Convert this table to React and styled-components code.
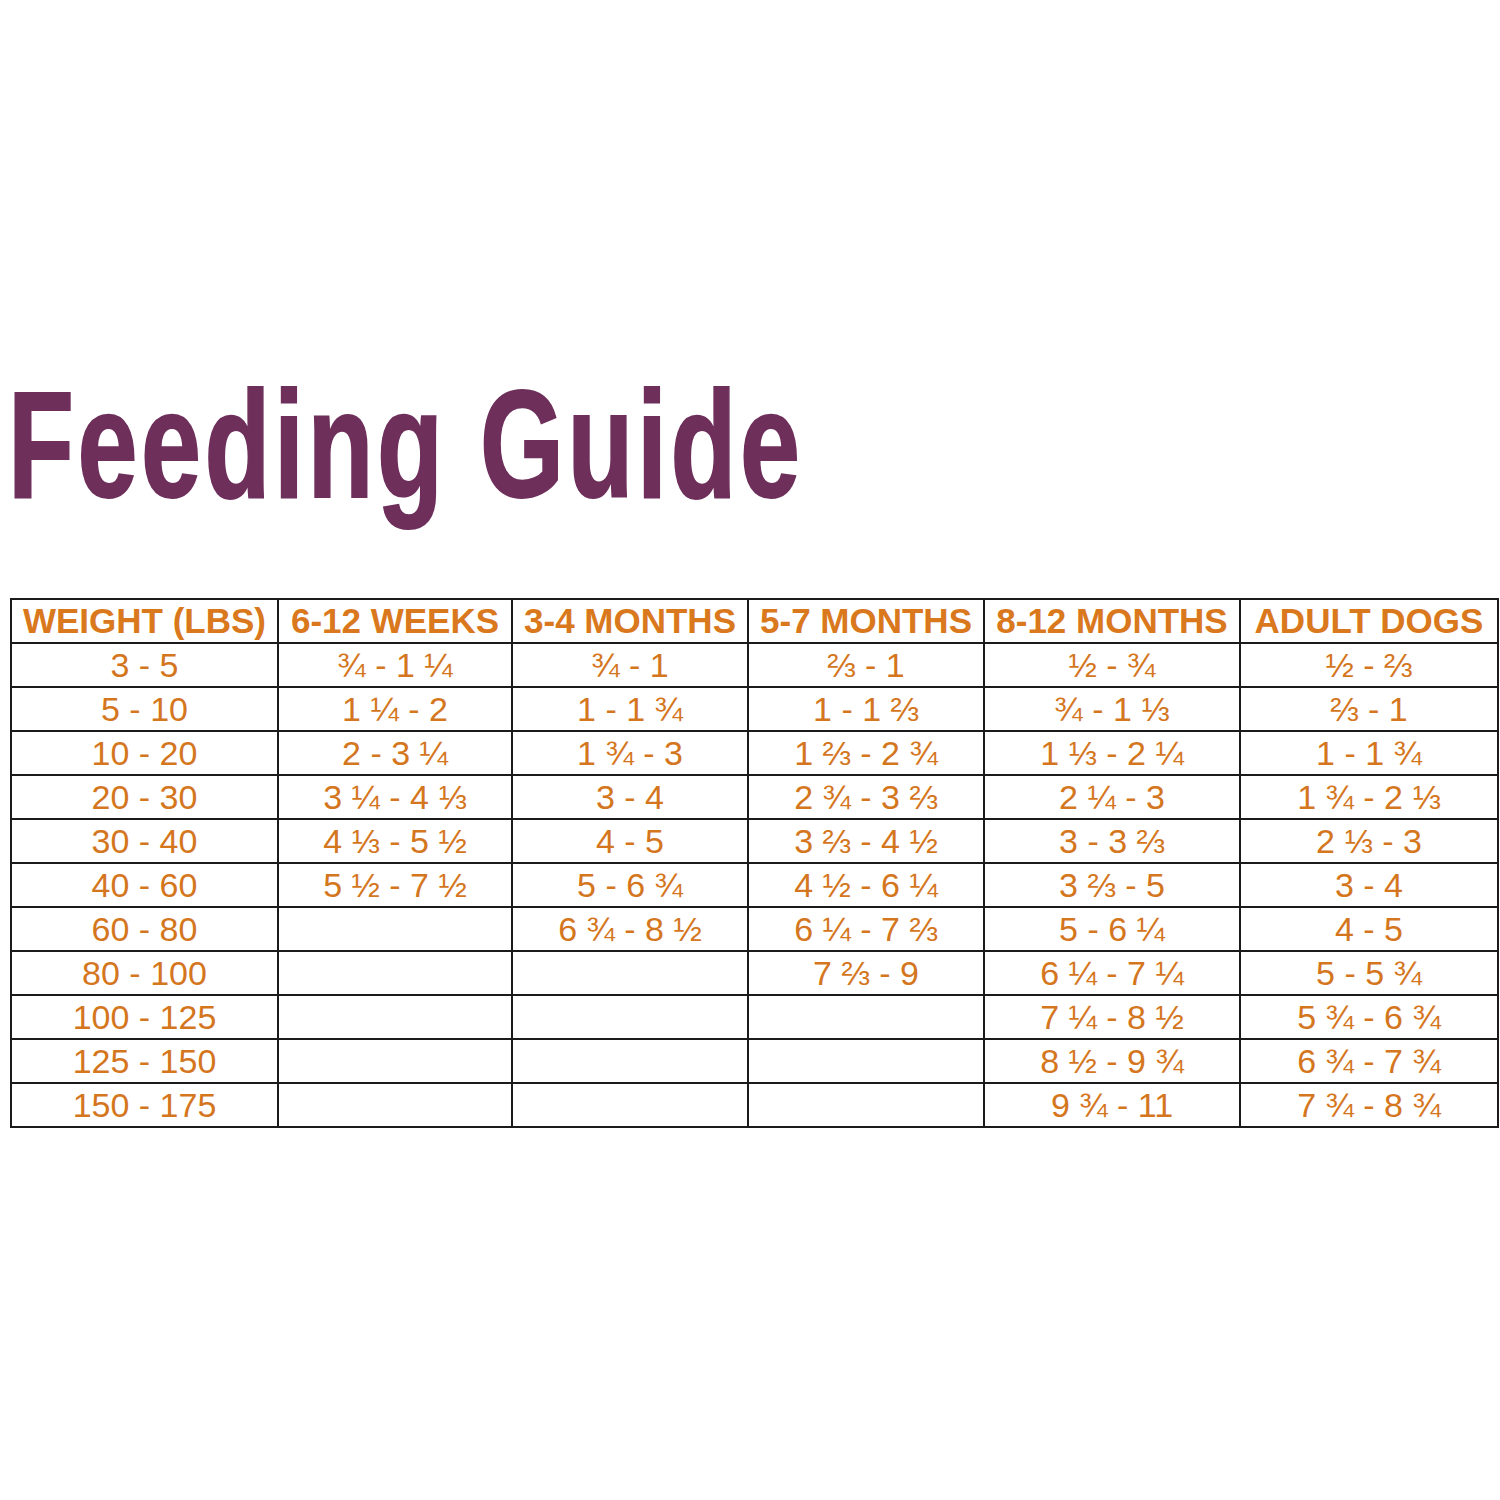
import React from "react";
import styled, { createGlobalStyle } from "styled-components";

const GlobalStyle = createGlobalStyle`
  html, body {
    margin: 0;
    padding: 0;
    background: #ffffff;
  }
  body {
    font-family: "Liberation Sans", Arial, sans-serif;
  }
`;

const StPage = styled.main`
  width: 1500px;
  height: 1500px;
  padding-top: 368px;
  box-sizing: border-box;
`;

const StTitle = styled.h1`
  margin: 0 0 78px 8px;
  display: inline-block;
  font-family: "Liberation Sans", Arial, sans-serif;
  font-weight: bold;
  font-size: 152px;
  line-height: 1;
  letter-spacing: 5px;
  color: #6e2f5b;
  -webkit-text-stroke: 2px #6e2f5b;
  transform: scaleX(0.71);
  transform-origin: left top;
  white-space: nowrap;
`;

const StTable = styled.table`
  margin-left: 10px;
  width: 1489px;
  border-collapse: collapse;
  table-layout: fixed;
  border: 2px solid #1b1b1b;
`;

const StHead = styled.th`
  width: ${({ $w }) => ($w ? `${$w}px` : "auto")};
  height: 42px;
  padding: 0;
  border: 2px solid #1b1b1b;
  font-size: 35px;
  font-weight: bold;
  color: #d9781c;
  text-align: center;
  white-space: nowrap;
`;

const StCell = styled.td`
  height: 42px;
  padding: 0;
  border: 2px solid #1b1b1b;
  font-size: 34px;
  color: #d4761e;
  text-align: center;
  white-space: nowrap;
  line-height: 1;
`;

const columns = [
  { title: "WEIGHT (LBS)", w: 265 },
  { title: "6-12 WEEKS", w: 232 },
  { title: "3-4 MONTHS", w: 234 },
  { title: "5-7 MONTHS", w: 234 },
  { title: "8-12 MONTHS", w: 254 },
  { title: "ADULT DOGS" },
];

const rows = [
  ["3 - 5", "¾ - 1 ¼", "¾ - 1", "⅔ - 1", "½ - ¾", "½ - ⅔"],
  ["5 - 10", "1 ¼ - 2", "1 - 1 ¾", "1 - 1 ⅔", "¾ - 1 ⅓", "⅔ - 1"],
  ["10 - 20", "2 - 3 ¼", "1 ¾ - 3", "1 ⅔ - 2 ¾", "1 ⅓ - 2 ¼", "1 - 1 ¾"],
  ["20 - 30", "3 ¼ - 4 ⅓", "3 - 4", "2 ¾ - 3 ⅔", "2 ¼ - 3", "1 ¾ - 2 ⅓"],
  ["30 - 40", "4 ⅓ - 5 ½", "4 - 5", "3 ⅔ - 4 ½", "3 - 3 ⅔", "2 ⅓ - 3"],
  ["40 - 60", "5 ½ - 7 ½", "5 - 6 ¾", "4 ½ - 6 ¼", "3 ⅔ - 5", "3 - 4"],
  ["60 - 80", "", "6 ¾ - 8 ½", "6 ¼ - 7 ⅔", "5 - 6 ¼", "4 - 5"],
  ["80 - 100", "", "", "7 ⅔ - 9", "6 ¼ - 7 ¼", "5 - 5 ¾"],
  ["100 - 125", "", "", "", "7 ¼ - 8 ½", "5 ¾ - 6 ¾"],
  ["125 - 150", "", "", "", "8 ½ - 9 ¾", "6 ¾ - 7 ¾"],
  ["150 - 175", "", "", "", "9 ¾ - 11", "7 ¾ - 8 ¾"],
];

export default function App() {
  return (
    <>
      <GlobalStyle />
      <StPage>
        <StTitle>Feeding Guide</StTitle>
        <StTable>
          <thead>
            <tr>
              {columns.map(({ title, w }) => (
                <StHead key={title} $w={w}>
                  {title}
                </StHead>
              ))}
            </tr>
          </thead>
          <tbody>
            {rows.map((row) => (
              <tr key={row[0]}>
                {row.map((value, i) => (
                  <StCell key={i}>{value}</StCell>
                ))}
              </tr>
            ))}
          </tbody>
        </StTable>
      </StPage>
    </>
  );
}
